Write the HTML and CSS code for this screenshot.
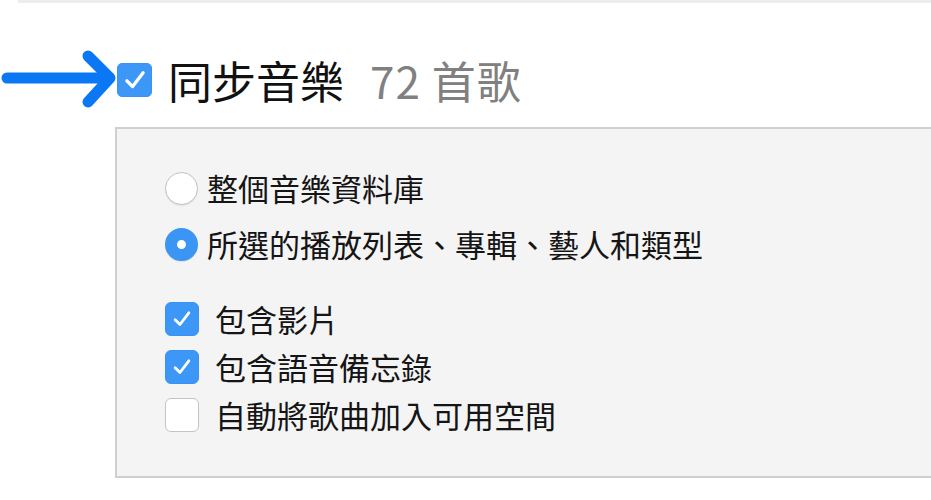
FILE: index.html
```html
<!DOCTYPE html>
<html lang="zh-Hant">

<head>
    <meta charset="UTF-8">
    <meta name="viewport" content="width=device-width, initial-scale=1.0">
    <title>同步音樂</title>
    <link rel="stylesheet" href="styles.css">
</head>

<body>

<div class="rule"></div>

<div class="header">
    <svg class="arrow" width="116" height="60" viewBox="0 0 116 60">
        <line x1="7" y1="28" x2="104" y2="28" />
        <polyline points="88,6 110,28 88,52" />
    </svg>
    <span class="box checked big">
        <svg class="tick" width="26" height="26" viewBox="0 0 16 16"><polyline points="3,8.5 6.5,12 13,3.5" /></svg>
    </span>
    <h1>同步音樂<span class="count">72 首歌</span></h1>
</div>

<div class="panel">
    <div class="radios">
        <div class="row">
            <span class="radio"></span>
            <span class="label">整個音樂資料庫</span>
        </div>
        <div class="row">
            <span class="radio on"></span>
            <span class="label">所選的播放列表、專輯、藝人和類型</span>
        </div>
    </div>

    <div class="checks">
        <div class="row">
            <span class="box checked">
                <svg class="tick" width="22" height="22" viewBox="0 0 16 16"><polyline points="3,8.5 6.5,12 13,3.5" /></svg>
            </span>
            <span class="label">包含影片</span>
        </div>
        <div class="row">
            <span class="box checked">
                <svg class="tick" width="22" height="22" viewBox="0 0 16 16"><polyline points="3,8.5 6.5,12 13,3.5" /></svg>
            </span>
            <span class="label">包含語音備忘錄</span>
        </div>
        <div class="row">
            <span class="box"></span>
            <span class="label">自動將歌曲加入可用空間</span>
        </div>
    </div>
</div>

</body>
</html>
```

FILE: styles.css
```css
body {
    margin: 0;
    background-color: #ffffff;
    font-family: "Noto Sans CJK TC", "Noto Sans", sans-serif;
    color: #1a1a1a;
}

.rule {
    height: 3px;
    margin-left: 18px;
    background-color: #ededed;
}

.header {
    display: flex;
    align-items: center;
    height: 60px;
    margin-top: 47px;
}

.arrow {
    flex: none;
    margin-right: 1px;
}

.arrow line,
.arrow polyline {
    fill: none;
    stroke: #0a78f5;
    stroke-width: 11;
    stroke-linecap: round;
    stroke-linejoin: round;
}

h1 {
    margin: 0 0 0 16px;
    font-size: 44px;
    font-weight: 400;
    line-height: 1.2;
    color: #111;
}

.count {
    margin-left: 26px;
    color: #808080;
    letter-spacing: 1px;
}

/* checkbox */
.box {
    display: flex;
    align-items: center;
    justify-content: center;
    flex: none;
    width: 32px;
    height: 32px;
    border: 1px solid #c4c4c4;
    border-radius: 6px;
    background-color: #fff;
}

.box.checked {
    border-color: #3893f5;
    background-color: #3d97f7;
}

.box.big {
    width: 33px;
    height: 32px;
    border-radius: 5px;
}

.tick {
    flex: none;
}

.tick polyline {
    fill: none;
    stroke: #fff;
    stroke-width: 2;
    stroke-linecap: round;
    stroke-linejoin: round;
}

/* radio button */
.radio {
    flex: none;
    box-sizing: border-box;
    width: 33px;
    height: 33px;
    border: 1px solid #c2c2c2;
    border-radius: 50%;
    background-color: #fff;
    box-shadow: 0 1px 1px rgba(0, 0, 0, 0.08);
}

.radio.on {
    border: 12px solid #3a95f5;
    background-color: #fff;
}

.panel {
    margin: 17px 0 0 115px;
    padding: 31px 0 37px 48px;
    border: 2px solid #cfcfcf;
    border-right: none;
    background-color: #f4f4f4;
}

.row {
    display: flex;
    align-items: center;
}

.radios .row {
    height: 56px;
}

.radios .label {
    margin-left: 9px;
}

.checks {
    margin-top: 23px;
}

.checks .row {
    height: 48px;
}

.checks .label {
    margin-left: 16px;
}

.label {
    font-size: 31px;
    line-height: 1.2;
    color: #151515;
}
```
